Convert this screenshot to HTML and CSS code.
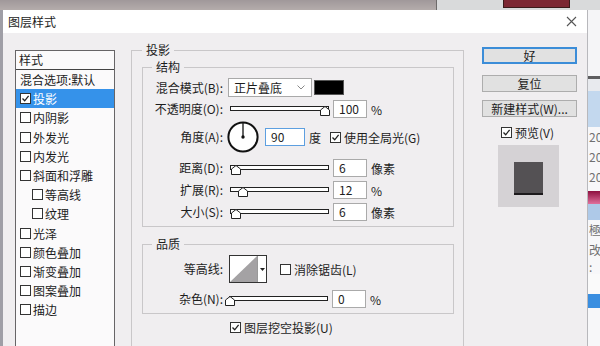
FILE: index.html
```html
<!DOCTYPE html>
<html lang="zh-CN">
<head>
  <meta charset="UTF-8">
  <meta name="viewport" content="width=device-width, initial-scale=1.0">
  <title>图层样式</title>
  <link rel="stylesheet" href="styles.css">
</head>
<body>
  <div class="topbar">
    <div class="topbar-left"></div>
    <div class="topbar-right"><div class="tab-red"></div></div>
  </div>
  <div class="desk">
    <div class="edge-left"></div>
    <div class="dialog">
      <div class="titlebar">
        <span>图层样式</span>
        <svg class="close" width="11" height="11" viewBox="0 0 11 11"><path d="M1 1 L10 10 M10 1 L1 10" stroke="#555" stroke-width="1.1"/></svg>
      </div>
      <div class="dialog-body">
        <!-- left: list of effects -->
        <div class="style-list">
          <div class="list-head">样式</div>
          <div class="list-item plain">混合选项:默认</div>
          <div class="list-item selected"><span class="cb on"><svg width="9" height="9" viewBox="0 0 9 9"><path d="M1.5 4.5 L3.7 6.8 L7.6 1.8" stroke="#222" stroke-width="1.3" fill="none"/></svg></span>投影</div>
          <div class="list-item"><span class="cb"></span>内阴影</div>
          <div class="list-item"><span class="cb"></span>外发光</div>
          <div class="list-item"><span class="cb"></span>内发光</div>
          <div class="list-item"><span class="cb"></span>斜面和浮雕</div>
          <div class="list-item sub"><span class="cb"></span>等高线</div>
          <div class="list-item sub"><span class="cb"></span>纹理</div>
          <div class="list-item"><span class="cb"></span>光泽</div>
          <div class="list-item"><span class="cb"></span>颜色叠加</div>
          <div class="list-item"><span class="cb"></span>渐变叠加</div>
          <div class="list-item"><span class="cb"></span>图案叠加</div>
          <div class="list-item"><span class="cb"></span>描边</div>
        </div>

        <!-- middle: drop shadow settings -->
        <div class="settings">
          <fieldset class="group outer">
            <legend>投影</legend>
            <fieldset class="group sub structure">
              <legend>结构</legend>
              <div class="row r-blend">
                <span class="lbl">混合模式(B):</span>
                <div class="dropdown">正片叠底<svg width="8" height="5" viewBox="0 0 8 5"><path d="M0.5 0.5 L4 4 L7.5 0.5" stroke="#888" fill="none"/></svg></div>
                <div class="swatch"></div>
              </div>
              <div class="row r-field">
                <span class="lbl">不透明度(O):</span>
                <div class="slider"><div class="track"></div><svg class="thumb" style="left:90px" width="10" height="10" viewBox="0 0 10 10"><path d="M0.5 9.5 V4 L5 0.5 L9.5 4 V9.5 Z" fill="#fff" stroke="#222"/></svg></div>
                <div class="num">100</div><span class="unit">%</span>
              </div>
              <div class="row r-angle">
                <span class="lbl">角度(A):</span>
                <svg class="dial" width="32" height="32" viewBox="0 0 32 32"><circle cx="16" cy="16" r="14.6" fill="#fff" stroke="#111" stroke-width="2"/><path d="M16 16 V2" stroke="#111" stroke-width="1.3"/><circle cx="16" cy="16" r="1.7" fill="#111"/></svg>
                <div class="num angle">90</div><span class="unit">度</span>
                <span class="cb on check-gap"><svg width="9" height="9" viewBox="0 0 9 9"><path d="M1.5 4.5 L3.7 6.8 L7.6 1.8" stroke="#222" stroke-width="1.3" fill="none"/></svg></span><span class="cb-text">使用全局光(G)</span>
              </div>
              <div class="row r-field r-after-dial">
                <span class="lbl">距离(D):</span>
                <div class="slider"><div class="track"></div><svg class="thumb" style="left:1px" width="10" height="10" viewBox="0 0 10 10"><path d="M0.5 9.5 V4 L5 0.5 L9.5 4 V9.5 Z" fill="#fff" stroke="#222"/></svg></div>
                <div class="num">6</div><span class="unit">像素</span>
              </div>
              <div class="row r-field">
                <span class="lbl">扩展(R):</span>
                <div class="slider"><div class="track"></div><svg class="thumb" style="left:8px" width="10" height="10" viewBox="0 0 10 10"><path d="M0.5 9.5 V4 L5 0.5 L9.5 4 V9.5 Z" fill="#fff" stroke="#222"/></svg></div>
                <div class="num">12</div><span class="unit">%</span>
              </div>
              <div class="row r-field">
                <span class="lbl">大小(S):</span>
                <div class="slider"><div class="track"></div><svg class="thumb" style="left:1px" width="10" height="10" viewBox="0 0 10 10"><path d="M0.5 9.5 V4 L5 0.5 L9.5 4 V9.5 Z" fill="#fff" stroke="#222"/></svg></div>
                <div class="num">6</div><span class="unit">像素</span>
              </div>
            </fieldset>

            <fieldset class="group sub quality">
              <legend>品质</legend>
              <div class="row r-contour">
                <span class="lbl">等高线:</span>
                <div class="contour">
                  <svg width="27" height="26" viewBox="0 0 27 26"><polygon points="0,26 27,0 27,26" fill="#a4a2a4"/></svg>
                  <div class="contour-arrow"><svg width="5" height="3" viewBox="0 0 5 3"><path d="M0 0 H5 L2.5 3 Z" fill="#222"/></svg></div>
                </div>
                <span class="cb aa-gap"></span><span class="cb-text">消除锯齿(L)</span>
              </div>
              <div class="row r-field r-noise">
                <span class="lbl">杂色(N):</span>
                <div class="slider"><div class="track"></div><svg class="thumb" style="left:-4px" width="10" height="10" viewBox="0 0 10 10"><path d="M0.5 9.5 V4 L5 0.5 L9.5 4 V9.5 Z" fill="#fff" stroke="#222"/></svg></div>
                <div class="num">0</div><span class="unit">%</span>
              </div>
            </fieldset>

            <div class="row knockout">
              <span class="cb on"><svg width="9" height="9" viewBox="0 0 9 9"><path d="M1.5 4.5 L3.7 6.8 L7.6 1.8" stroke="#222" stroke-width="1.3" fill="none"/></svg></span><span class="cb-text">图层挖空投影(U)</span>
            </div>
          </fieldset>
        </div>

        <!-- right: buttons and preview -->
        <div class="actions">
          <div class="btn default">好</div>
          <div class="btn reset">复位</div>
          <div class="btn new-style">新建样式(W)...</div>
          <div class="preview-check">
            <span class="cb on"><svg width="9" height="9" viewBox="0 0 9 9"><path d="M1.5 4.5 L3.7 6.8 L7.6 1.8" stroke="#222" stroke-width="1.3" fill="none"/></svg></span><span class="cb-text">预览(V)</span>
          </div>
          <div class="preview-box"><div class="sample"></div></div>
        </div>
      </div>
    </div>

    <!-- strip of the app window behind the dialog -->
    <div class="bg-app">
      <div class="bg-light"></div>
      <div class="bg-line"></div>
      <div class="bg-gap"></div>
      <div class="bg-blue"></div>
      <div class="bg-text">20</div>
      <div class="bg-text">20</div>
      <div class="bg-text">20</div>
      <div class="bg-magenta"></div>
      <div class="bg-pale"></div>
      <div class="bg-text">極</div>
      <div class="bg-text">改</div>
      <div class="bg-text small">:</div>
      <div class="bg-white"></div>
      <div class="bg-bar"></div>
    </div>
  </div>
</body>
</html>
```

FILE: styles.css
```css
body {
  margin: 0;
  width: 600px;
  height: 346px;
  overflow: hidden;
  font-family: "Noto Sans CJK SC", "Noto Sans", sans-serif;
  font-size: 12px;
  color: #1d1d1d;
  background: #a7a3a6;
}

.topbar {
  height: 10px;
  display: flex;
}

.topbar-left {
  width: 436px;
  background: linear-gradient(#a0989a, #b4acab);
  border-right: 1px solid #6d6a6a;
}

.topbar-right {
  flex: 1;
  background: #d9dadb;
  padding-left: 66px;
}

.tab-red {
  width: 67px;
  height: 8px;
  box-sizing: border-box;
  background: #7c2632;
  border: 1px solid #3a1a1a;
  border-top: 0;
}

.desk {
  display: flex;
  height: 336px;
}

.edge-left {
  width: 3px;
  background: #9f9ea6;
}

.dialog {
  width: 585px;
  background: #f0eef0;
}

.titlebar {
  height: 23px;
  background: #fff;
  display: flex;
  align-items: center;
  justify-content: space-between;
  padding: 0 10px 0 5px;
}

.dialog-body {
  display: flex;
  align-items: flex-start;
  padding: 9px 0 0 12px;
}

/* effects list */
.style-list {
  width: 100px;
  height: 310px;
  margin-top: 8px;
  box-sizing: border-box;
  border: 1px solid #676567;
  background: #fbfafb;
}

.list-head {
  height: 19px;
  line-height: 18px;
  padding-left: 3px;
  border-bottom: 1px solid #444;
  box-sizing: border-box;
}

.list-item {
  height: 19.2px;
  display: flex;
  align-items: center;
  padding-left: 4px;
  white-space: nowrap;
}

.list-item .cb {
  margin-right: 2px;
}

.list-item.sub {
  padding-left: 16px;
}

.list-item.selected {
  background: #3592ea;
  color: #fff;
}

.cb {
  width: 11px;
  height: 11px;
  box-sizing: border-box;
  border: 1px solid #333;
  background: #fff;
  display: inline-flex;
  align-items: center;
  justify-content: center;
  flex: none;
}

.cb-text {
  margin-left: 3px;
  white-space: nowrap;
}

/* settings groups */
.settings {
  width: 333px;
  margin-left: 16px;
}

.group {
  margin: 0;
  min-width: 0;
  border: 1px solid #c9c7c9;
}

.group legend {
  padding: 0 4px;
  line-height: 16px;
  height: 16px;
}

.group.outer {
  padding: 1px 9px 30px 10px;
}

.group.sub {
  padding: 3px 9px 5px 9px;
}

.structure {
  display: flex;
  flex-direction: column;
  gap: 4px;
}

.quality {
  margin-top: 9px;
  display: flex;
  flex-direction: column;
  gap: 7px;
  padding-top: 4px;
  padding-bottom: 4px;
}

.row {
  display: flex;
  align-items: center;
  height: 18px;
  white-space: nowrap;
}

.lbl {
  width: 71px;
  flex: none;
  text-align: right;
  line-height: 16px;
}

.r-blend {
  height: 19px;
  margin-bottom: -1px;
}

.dropdown {
  margin-left: 5px;
  width: 84px;
  height: 19px;
  box-sizing: border-box;
  border: 1px solid #a9a9a9;
  background: #fff;
  display: flex;
  align-items: center;
  justify-content: space-between;
  padding: 0 6px 0 5px;
}

.swatch {
  margin-left: 2px;
  width: 30px;
  height: 15px;
  box-sizing: border-box;
  background: #000;
  border: 1px solid #555;
}

.slider {
  position: relative;
  margin-left: 7px;
  width: 99px;
  height: 18px;
}

.track {
  margin-top: 6px;
  height: 5px;
  box-sizing: border-box;
  border: 1px solid #222;
  background: #fff;
}

.thumb {
  position: absolute;
  top: 6px;
}

.num {
  margin-left: 4px;
  width: 34px;
  height: 18px;
  box-sizing: border-box;
  border: 1px solid #aaa;
  background: #fff;
  padding-left: 5px;
  line-height: 16px;
}

.unit {
  margin-left: 4px;
}

.r-angle {
  height: 30px;
  margin-bottom: 3px;
}

.dial {
  margin-left: 4px;
  flex: none;
}

.num.angle {
  margin-left: 6px;
  width: 40px;
  border-color: #5d9fe0;
}

.unit + .check-gap {
  margin-left: 9px;
}

.r-contour {
  height: 28px;
}

.contour {
  margin-left: 6px;
  width: 38px;
  height: 28px;
  box-sizing: border-box;
  border: 1px solid #333;
  background: #fff;
  display: flex;
}

.contour-arrow {
  flex: 1;
  border-left: 1px solid #999;
  display: flex;
  align-items: center;
  justify-content: center;
}

.aa-gap {
  margin-left: 13px;
}

.r-noise .slider {
  margin-left: 6px;
}

.knockout {
  margin: 5px 0 0 88px;
  height: 16px;
}

/* buttons and preview */
.actions {
  width: 95px;
  margin-left: 18px;
  margin-top: 5px;
}

.btn {
  height: 17px;
  box-sizing: border-box;
  border: 1px solid #adadad;
  background: #e1e1e1;
  text-align: center;
  line-height: 15px;
  white-space: nowrap;
}

.btn.default {
  border: 2px solid #3c8dd8;
  line-height: 13px;
}

.btn.reset {
  margin-top: 11px;
}

.btn.new-style {
  margin-top: 8px;
}

.preview-check {
  margin: 7px 0 0 19px;
  height: 16px;
  display: flex;
  align-items: center;
}

.preview-box {
  margin: 5px 0 0 16px;
  width: 61px;
  height: 62px;
  box-sizing: border-box;
  padding-top: 17px;
  background: #d5d2d5;
  display: flex;
  justify-content: center;
  align-items: flex-start;
}

.sample {
  width: 29px;
  height: 33px;
  box-sizing: border-box;
  background: #545154;
  border-bottom: 2px solid #1c1a1c;
}

/* app behind the dialog */
.bg-app {
  width: 12px;
  overflow: hidden;
  border-left: 1px solid #b8b8bc;
  background: #f7f7f9;
  color: #707070;
  white-space: nowrap;
}

.bg-light { height: 66px; background: #f5f5f7; }
.bg-line { height: 3px; background: #5e5e60; }
.bg-gap { height: 12px; background: #e8eaee; }
.bg-blue { height: 36px; background: #c3d8ee; }
.bg-text { height: 20px; line-height: 20px; padding-left: 1px; }
.bg-text.small { height: 14px; line-height: 14px; }
.bg-magenta { height: 13px; margin-top: 4px; background: linear-gradient(#8e1040, #e0709c); }
.bg-pale { height: 16px; background: #aec9e8; }
.bg-white { height: 20px; background: #fafafa; }
.bg-bar { height: 14px; background: #3a8ee0; }
```
